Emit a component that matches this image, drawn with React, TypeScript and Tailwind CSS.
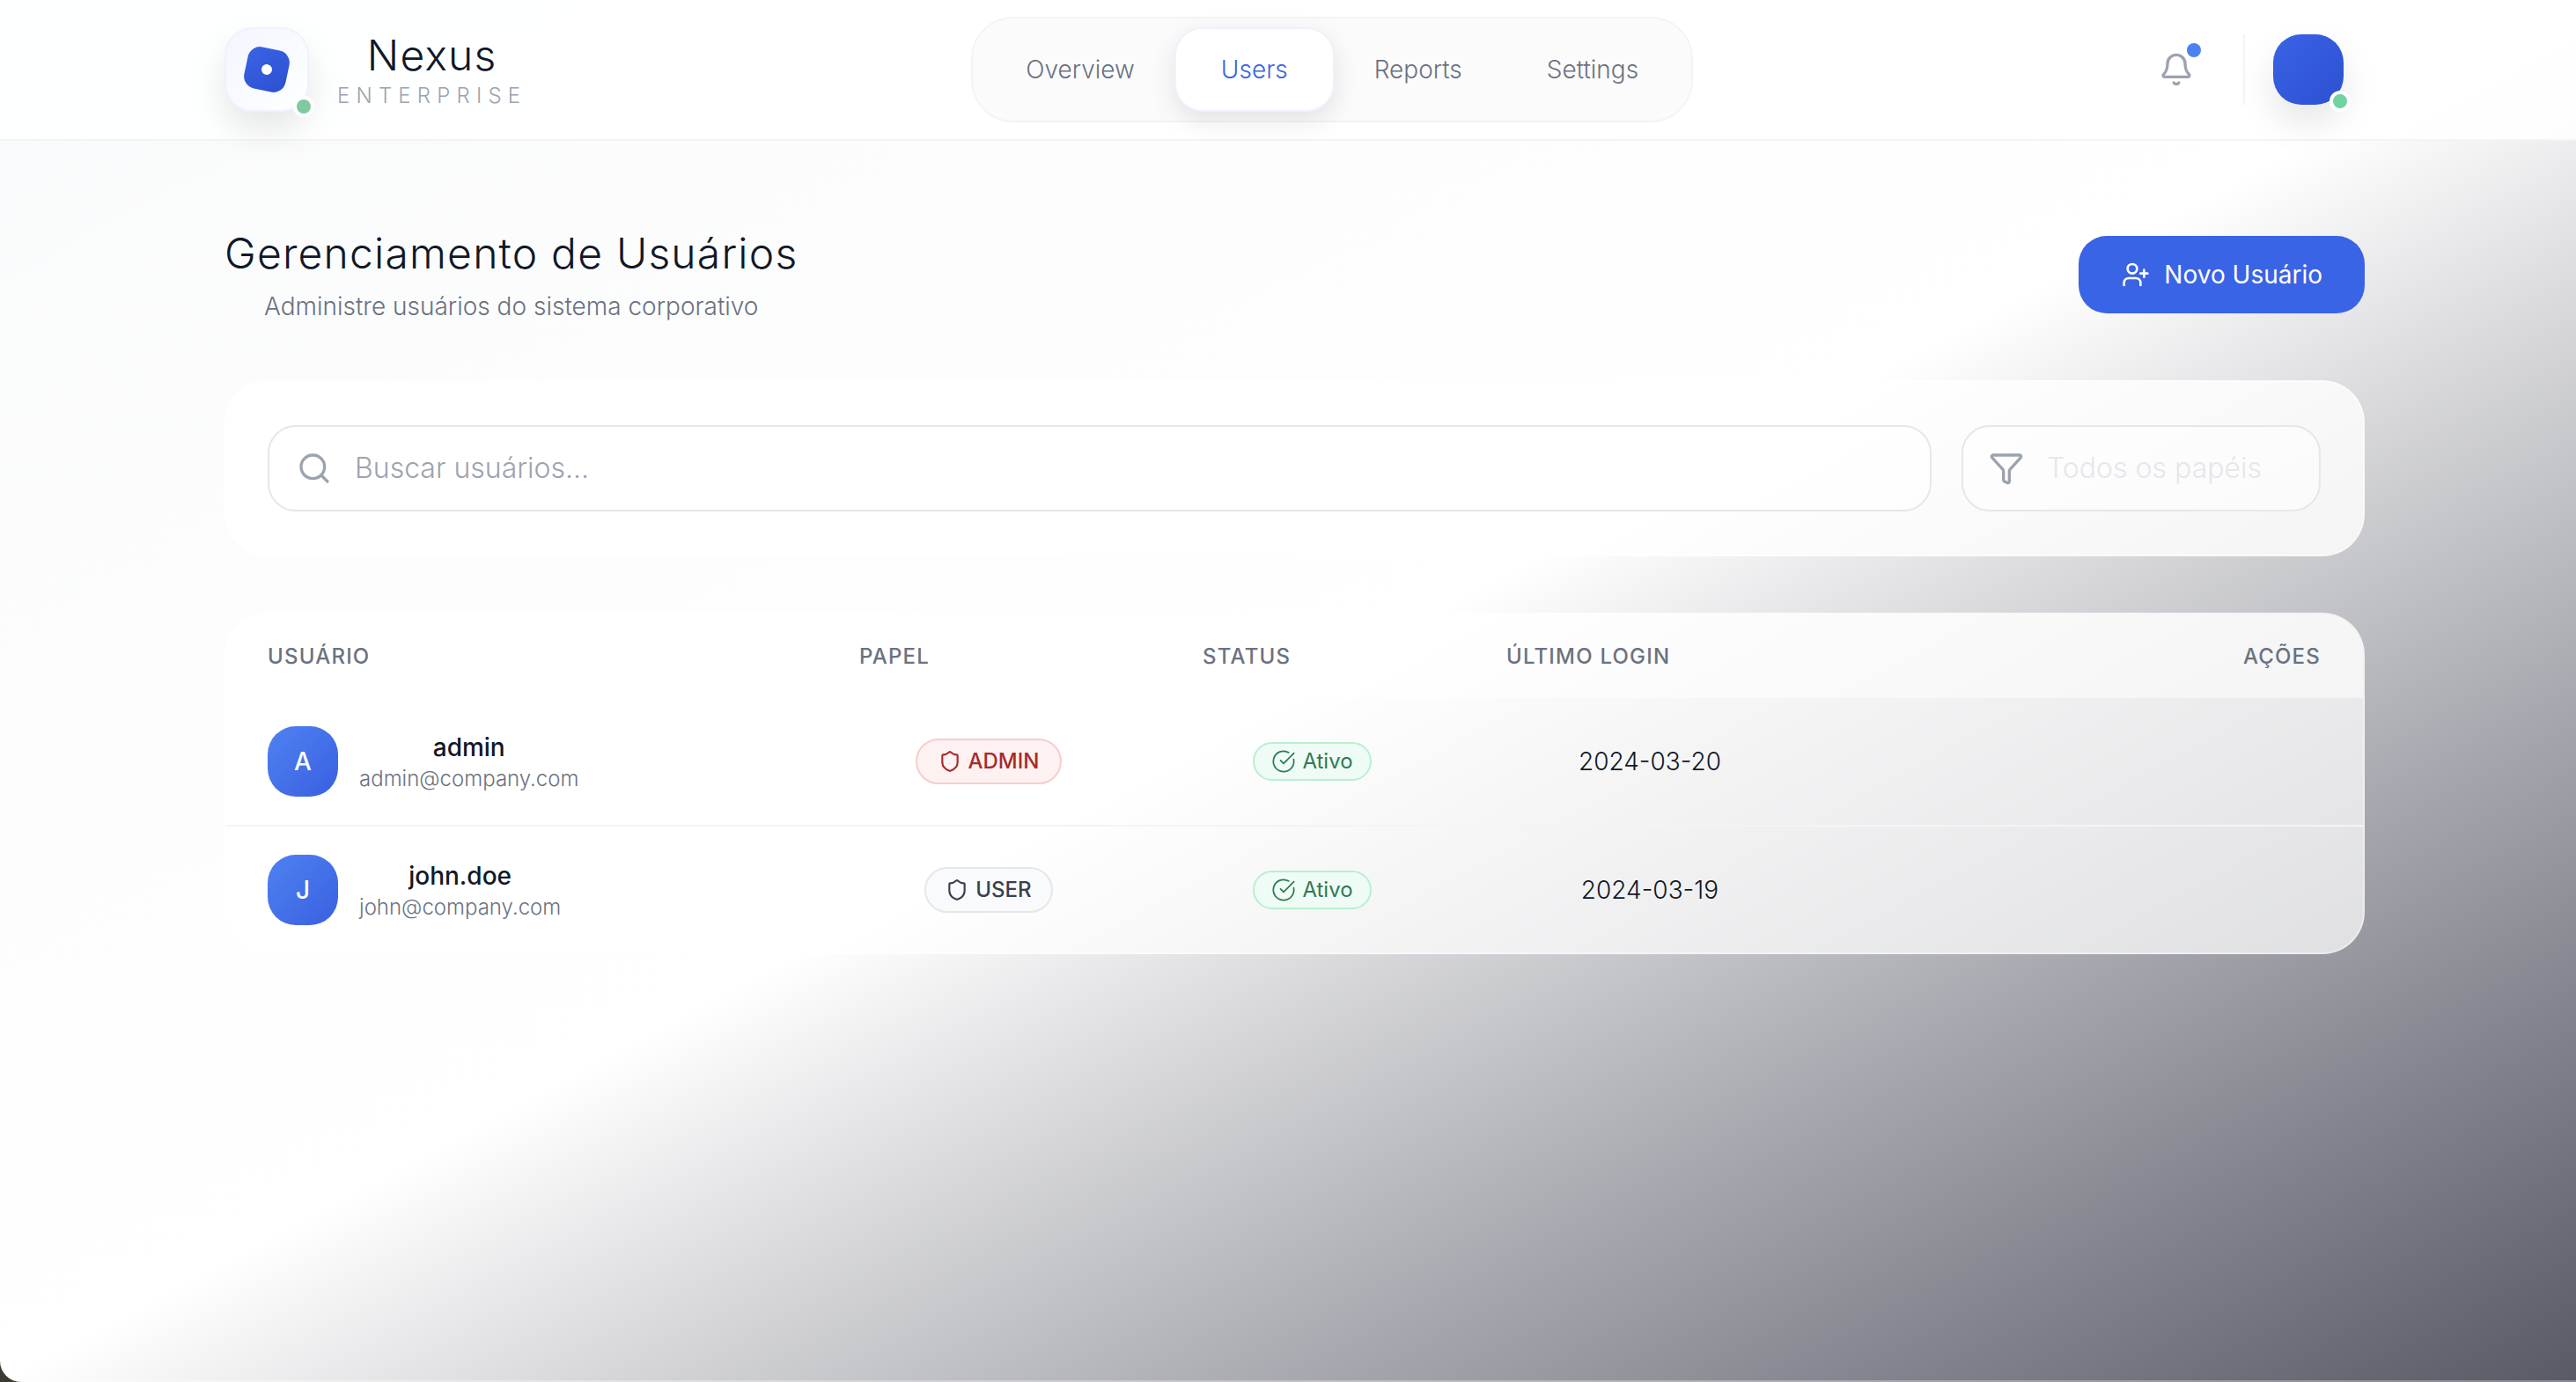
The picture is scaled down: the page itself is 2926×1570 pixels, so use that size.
import { Bell, CircleCheckBig, Funnel, Search, Shield, UserPlus } from 'lucide-react';

const navItems = ['Overview', 'Users', 'Reports', 'Settings'];

const users = [
  { initial: 'A', name: 'admin', email: 'admin@company.com', role: 'ADMIN', lastLogin: '2024-03-20' },
  { initial: 'J', name: 'john.doe', email: 'john@company.com', role: 'USER', lastLogin: '2024-03-19' },
];

const thClass = 'h-[95px] px-12 text-left text-[24px] font-medium tracking-[0.05em] text-[#6b7280]';

function App() {
  return (
    <div className="h-[1570px] overflow-hidden bg-[#3d3b34] font-['Inter',sans-serif]">
      <div className="relative h-[1570px] overflow-hidden rounded-bl-[24px] bg-gradient-to-br from-[#f9fafb] via-white via-50% to-[#585a66]">
        <header className="flex h-[160px] items-center justify-between border-b-2 border-[#f3f4f6] bg-white/90 pl-[255px] pr-[264px]">
          <div className="flex items-center gap-8">
            <div className="relative flex h-24 w-24 items-center justify-center rounded-[32px] border-2 border-[#eef2fe] bg-gradient-to-br from-[#f3f6ff] to-white shadow-[0_20px_40px_rgba(0,0,0,0.1)]">
              <div className="flex h-12 w-12 rotate-12 items-center justify-center rounded-[14px] bg-gradient-to-br from-[#3b63e6] to-[#2c50d0]">
                <div className="h-3 w-3 rounded-full bg-white" />
              </div>
              <span className="absolute -bottom-2 -right-2 h-6 w-6 rounded-full border-4 border-white bg-[#80c8a0]" />
            </div>
            <div className="text-center">
              <div className="text-[48px] leading-[60px] font-light tracking-[0.025em] text-[#111827]">Nexus</div>
              <div className="text-[24px] leading-[32px] font-light tracking-[0.3em] text-[#9ca3af]">ENTERPRISE</div>
            </div>
          </div>

          <nav className="-ml-1 flex h-[120px] items-center rounded-[48px] border-2 border-[#f3f4f6] bg-[#fbfbfc] px-3">
            {navItems.map((item) => (
              <div
                key={item}
                className={
                  item === 'Users'
                    ? '-mx-[3px] flex h-24 items-center rounded-[32px] border-2 border-[#eef2fe] bg-white px-[51px] text-[28px] font-light text-[#3a64e6] shadow-[0_10px_30px_rgba(0,0,0,0.1)]'
                    : 'flex h-24 items-center px-12 text-[28px] font-light text-[#6b7280]'
                }
              >
                {item}
              </div>
            ))}
          </nav>

          <div className="flex items-center gap-8">
            <div className="relative mr-1 flex h-20 w-20 items-center justify-center">
              <Bell size={40} strokeWidth={2} className="text-[#9ca3af]" />
              <span className="absolute right-[12px] top-[10px] h-4 w-4 rounded-full bg-[#4c82f0]" />
            </div>
            <div className="h-20 w-0.5 bg-[#f3f4f6]" />
            <div className="relative h-20 w-20 rounded-[32px] bg-gradient-to-br from-[#3b63e6] to-[#2c50d0] shadow-[0_20px_40px_rgba(0,0,0,0.1)]">
              <span className="absolute -bottom-2 -right-2 h-6 w-6 rounded-full border-4 border-white bg-[#6ed3a0]" />
            </div>
          </div>
        </header>

        <main className="pl-[255px] pr-[240px] pt-24">
          <div className="flex items-start justify-between">
            <div className="text-center">
              <h1 className="text-[48px] leading-[64px] font-light tracking-[0.025em] text-[#111827]">Gerenciamento de Usuários</h1>
              <p className="mt-2 text-[28px] leading-[40px] font-light text-[#6b7280]">Administre usuários do sistema corporativo</p>
            </div>
            <button className="mt-3 flex h-[88px] items-center gap-4 rounded-[32px] bg-[#3a64e6] pl-[49px] pr-12 text-[28px] font-normal text-white">
              <UserPlus size={32} strokeWidth={2} />
              Novo Usuário
            </button>
          </div>

          <div className="mt-16 flex h-[200px] items-center gap-[34px] rounded-[48px] border-2 border-white/40 bg-white/80 pl-[47px] pr-12">
            <div className="flex h-[98px] flex-1 items-center gap-[26px] rounded-[32px] border-2 border-[#e5e7eb] bg-white/50 pl-[31px]">
              <Search size={40} strokeWidth={2} className="shrink-0 text-[#9ca3af]" />
              <input
                placeholder="Buscar usuários..."
                className="w-full bg-transparent text-[32px] font-light outline-none placeholder:text-[#9ca3af]"
              />
            </div>
            <div className="flex h-[98px] w-[408px] items-center gap-[26px] rounded-[32px] border-2 border-[#e5e7eb] bg-white/50 pl-[29px] text-[32px] font-light text-[#e5e7eb]">
              <Funnel size={40} strokeWidth={2} className="shrink-0 text-[#9ca3af]" />
              Todos os papéis
            </div>
          </div>

          <div className="mt-16 overflow-hidden rounded-[48px] border-2 border-white/40 bg-white/70">
            <table className="w-full table-fixed">
              <thead className="bg-white/50">
                <tr>
                  <th className={`${thClass} w-[671px] !pl-[47px]`}>USUÁRIO</th>
                  <th className={`${thClass} w-[390px]`}>PAPEL</th>
                  <th className={`${thClass} w-[345px]`}>STATUS</th>
                  <th className={`${thClass} w-[422px]`}>ÚLTIMO LOGIN</th>
                  <th className={`${thClass} !text-right`}>AÇÕES</th>
                </tr>
              </thead>
              <tbody>
                {users.map((user) => (
                  <tr key={user.name} className="h-[145px] border-b-2 border-[#f3f4f6] last:h-[144px] last:border-0">
                    <td className="pl-[47px] pr-12">
                      <div className="flex items-center gap-6">
                        <div className="flex h-20 w-20 items-center justify-center rounded-[32px] bg-gradient-to-br from-[#4f82f2] to-[#3a5fe0] text-[28px] font-medium text-white">
                          {user.initial}
                        </div>
                        <div className="text-center">
                          <div className="text-[28px] leading-[40px] font-medium text-[#111827]">{user.name}</div>
                          <div className="text-[24px] leading-[32px] font-light text-[#6b7280]">{user.email}</div>
                        </div>
                      </div>
                    </td>
                    <td className="px-12 text-center">
                      {user.role === 'ADMIN' ? (
                        <span className="inline-flex h-[52px] items-center gap-2 rounded-full border-2 border-[#f7cdcd] bg-[#fdf1f1] px-6 text-[24px] font-medium text-[#a82a2a]">
                          <Shield size={26} strokeWidth={2} />
                          ADMIN
                        </span>
                      ) : (
                        <span className="inline-flex h-[52px] items-center gap-2 rounded-full border-2 border-[#e5e7eb] bg-[#f9fafb] px-[22px] text-[24px] font-medium text-[#374151]">
                          <Shield size={26} strokeWidth={2} />
                          USER
                        </span>
                      )}
                    </td>
                    <td className="px-12 text-center">
                      <span className="inline-flex h-[44px] items-center gap-[7px] rounded-full border-2 border-[#b8f0cf] bg-[#effbf5] px-[19px] text-[24px] font-normal text-[#2f7a55]">
                        <CircleCheckBig size={28} strokeWidth={1.5} />
                        Ativo
                      </span>
                    </td>
                    <td className="px-12 text-center text-[28px] font-light text-[#111827]">{user.lastLogin}</td>
                    <td className="px-12" />
                  </tr>
                ))}
              </tbody>
            </table>
          </div>
        </main>

        <div className="absolute bottom-0 left-0 right-0 h-0.5 bg-white/30" />
      </div>
    </div>
  );
}

export default App;
